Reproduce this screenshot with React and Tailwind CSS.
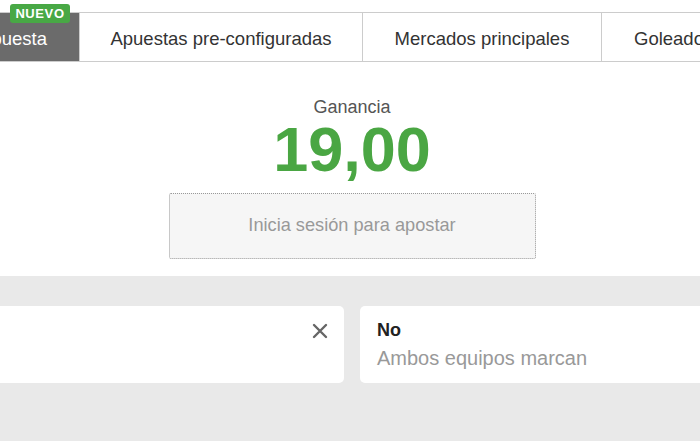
import React from 'react';

const tabs = [
  { label: 'Apuestas pre-configuradas', width: 'w-[283px]' },
  { label: 'Mercados principales', width: 'w-[239px]' },
];

function CloseIcon() {
  return (
    <svg width="16" height="16" viewBox="0 0 16 16" fill="none">
      <path d="M2 2 L14 14 M14 2 L2 14" stroke="#666" strokeWidth="2.4" strokeLinecap="round" />
    </svg>
  );
}

export default function App() {
  return (
    <div className="w-[700px] h-[441px] overflow-hidden bg-white font-['Liberation_Sans',Arial,sans-serif] flex flex-col">
      <div className="pt-3 pb-[17px]">
        {/* tab bar, scrolled a bit to the right */}
        <div className="flex -ml-[45px] h-[50px] border-y border-[#cccccc] w-max">
          <div className="relative w-[125px] shrink-0 border-r border-[#cccccc] bg-[#6b6b6b] text-white text-[18.5px] flex items-center justify-end pr-8 pt-1">
            Apuesta
            <span className="absolute -top-[9px] left-[55px] h-[19px] w-[60px] rounded-[3px] bg-[#48a845] text-white text-[13px] font-bold tracking-[0.6px] flex items-center justify-center">
              NUEVO
            </span>
          </div>
          {tabs.map((t) => (
            <div
              key={t.label}
              className={`${t.width} shrink-0 border-r border-[#cccccc] text-[#333] text-[18.5px] flex items-center justify-center pt-1`}
            >
              {t.label}
            </div>
          ))}
          <div className="shrink-0 px-8 text-[#333] text-[18.5px] flex items-center pt-1">Goleadores</div>
        </div>

        <div className="-ml-[28px] w-[760px] flex flex-col items-center">
          <div className="mt-[35px] text-[18px] leading-5 text-[#555]">Ganancia</div>
          <div className="mt-px text-[63px] leading-none font-bold text-[#4aa643]">19,00</div>
          <div className="mt-[12px] w-[367px] h-[66px] bg-[#f6f6f6] border border-dotted border-[#999] rounded-[2px] flex items-center justify-center text-[18.2px] text-[#999]">
            Inicia sesión para apostar
          </div>
        </div>
      </div>

      <div className="flex-1 bg-[#e9e9e9] -ml-[28px] w-[760px] px-4 pt-[30px]">
        <div className="grid grid-cols-2 gap-4">
          <div className="h-[77px] bg-white rounded-[5px] flex justify-end pr-4 pt-[17px]">
            <CloseIcon />
          </div>
          <div className="h-[77px] bg-white rounded-[5px] pl-[17px] pt-[12px]">
            <div className="text-[18px] font-bold text-[#222] leading-6">No</div>
            <div className="text-[20px] text-[#999] leading-6 mt-[4px]">Ambos equipos marcan</div>
          </div>
        </div>
      </div>
    </div>
  );
}
